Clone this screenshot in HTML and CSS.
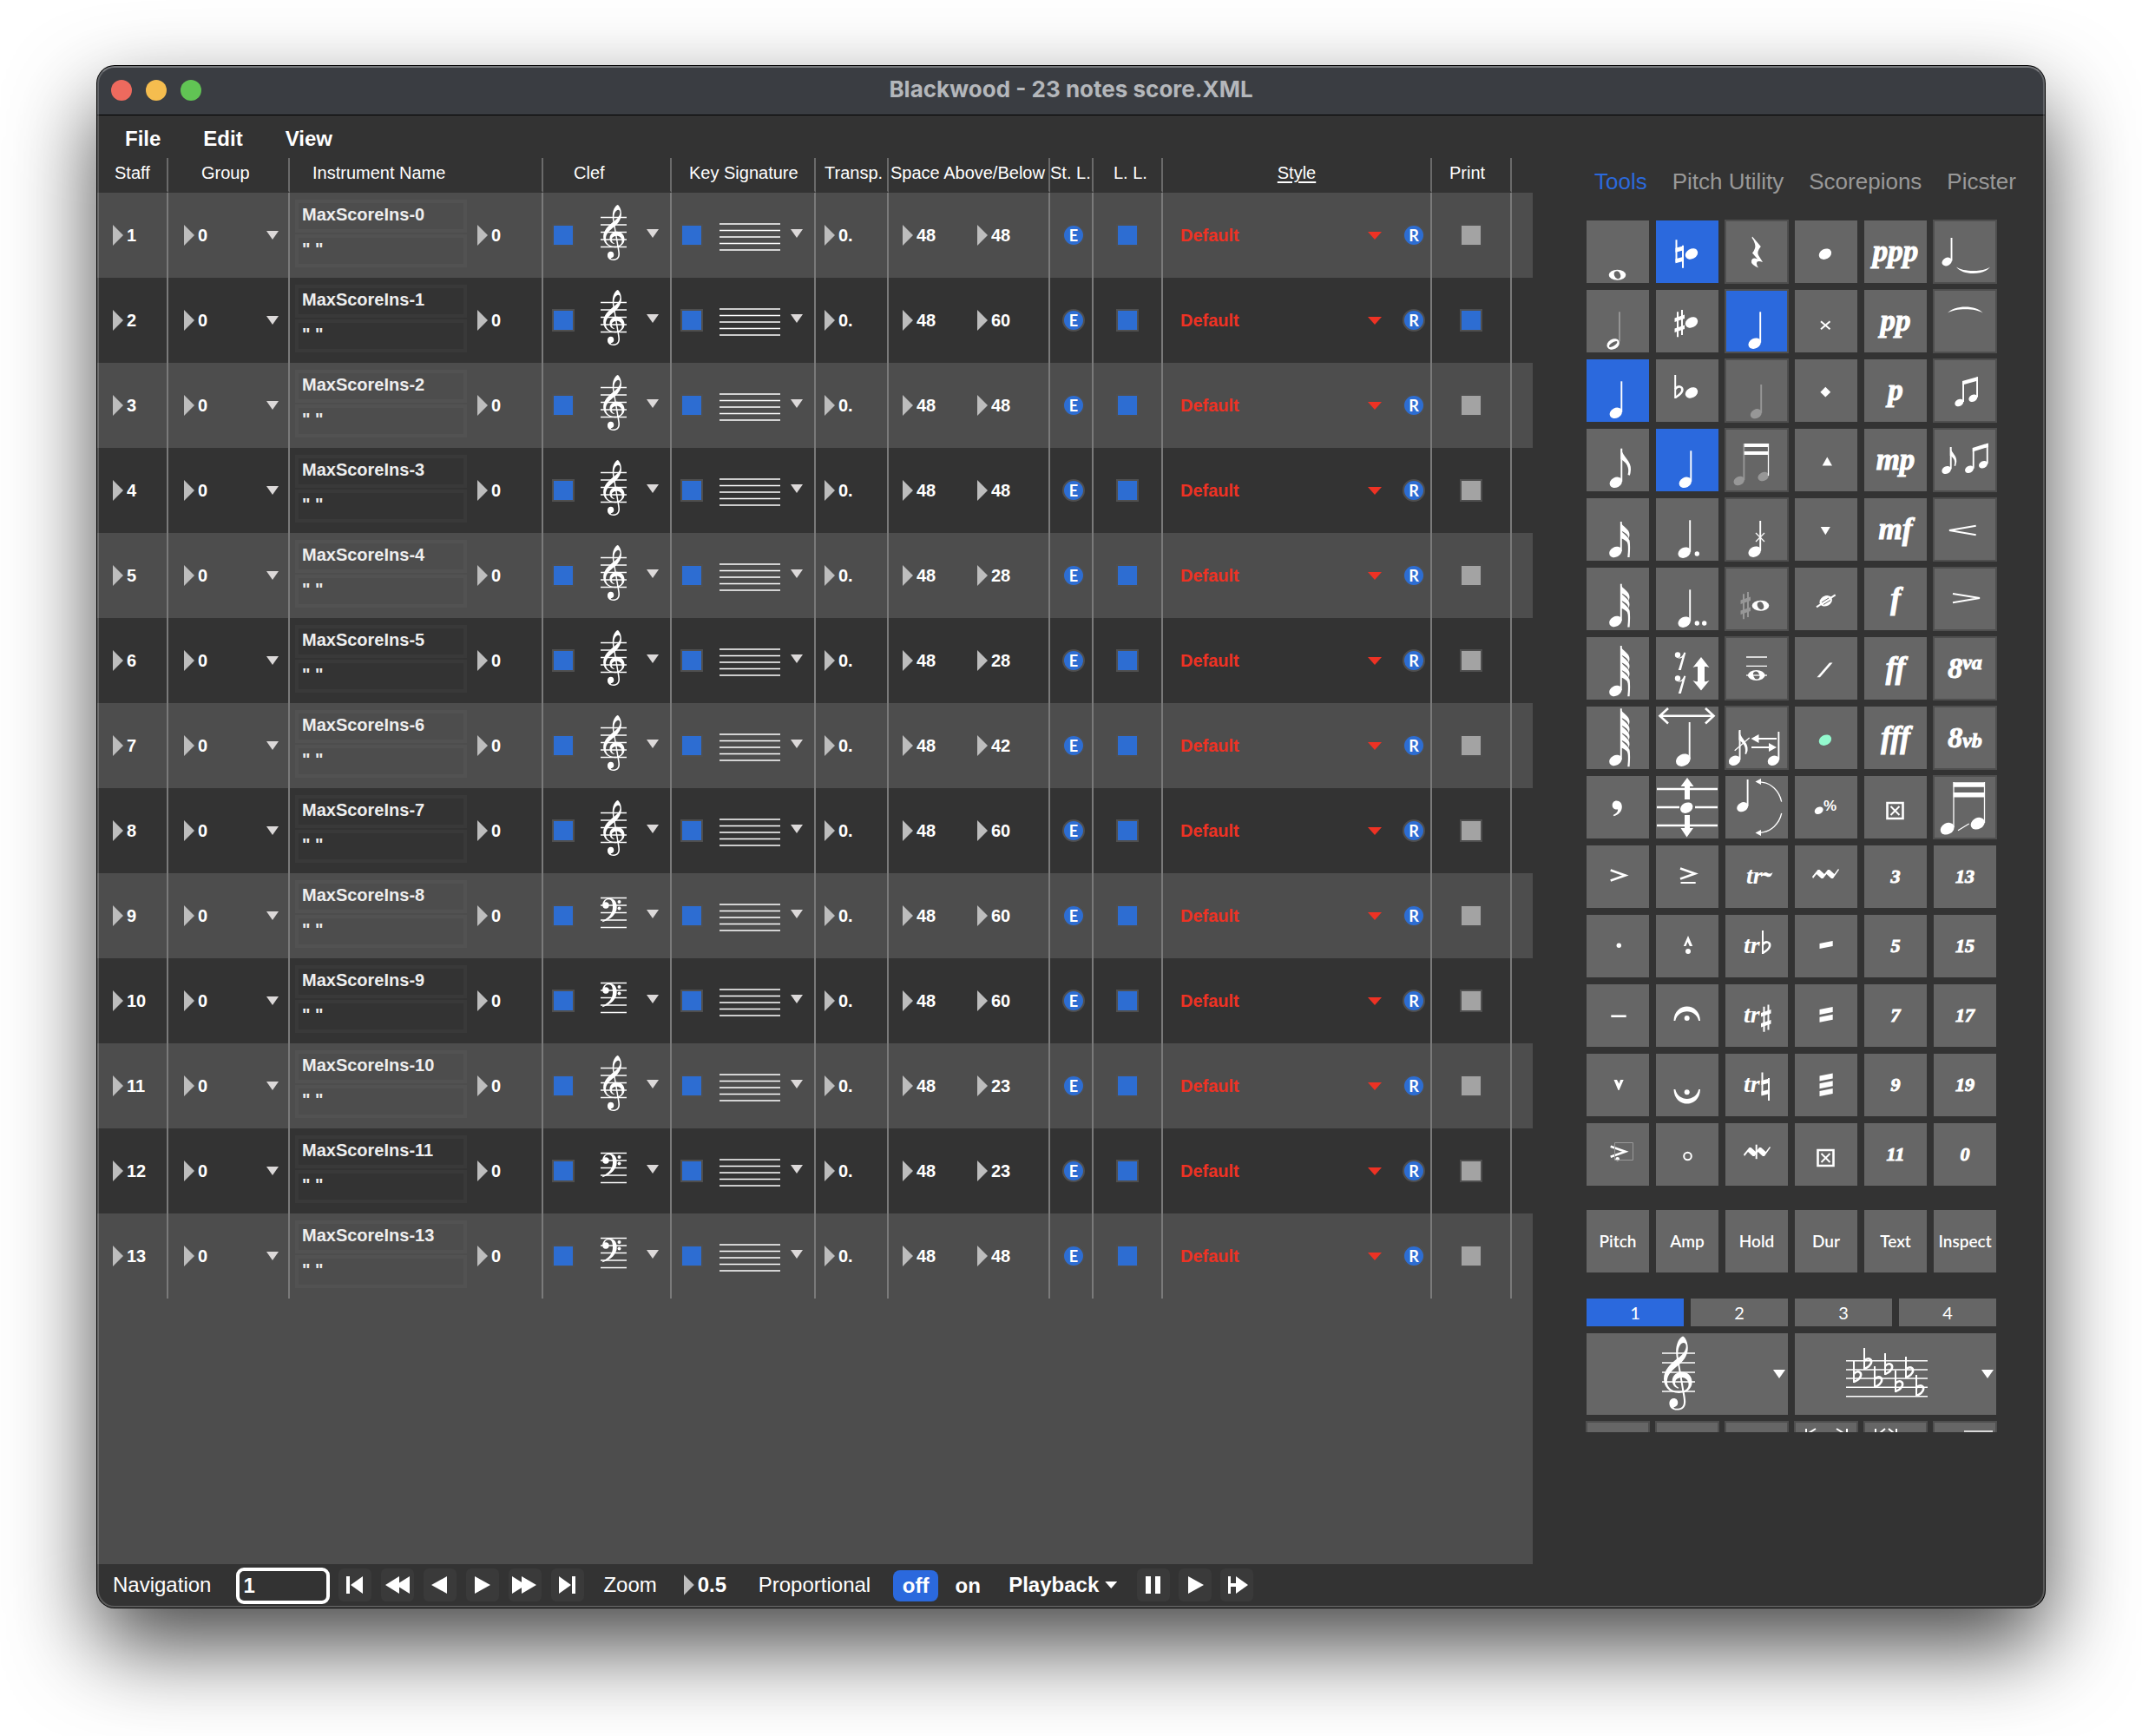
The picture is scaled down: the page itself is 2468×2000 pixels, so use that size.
FILE: index.html
```html
<!DOCTYPE html>
<html lang="en">
<head>
<meta charset="utf-8">
<title>Blackwood - 23 notes score.XML</title>
<link rel="stylesheet" href="styles.css">
</head>
<body>
<svg class="defs" aria-hidden="true">
  <symbol id="treble" viewBox="0 -1100 680 1760">
    <path transform="scale(1 -1)" d="M376 415l25 -145c3 -18 3 -18 29 -18c147 0 241 -113 241 -241c0 -113 -67 -198 -168 -238c-14 -6 -15 -5 -13 -17c11 -62 29 -157 29 -214c0 -170 -130 -200 -197 -200c-151 0 -190 98 -190 163c0 62 40 115 107 115c61 0 96 -47 96 -102c0 -58 -36 -85 -67 -94c-23 -7 -32 -10 -32 -17c0 -13 26 -29 80 -29c59 0 159 18 159 166c0 47 -15 134 -27 201c-2 12 -4 11 -15 9c-20 -4 -46 -6 -69 -6c-245 0 -364 165 -364 339c0 202 153 345 297 464c12 10 11 12 9 24c-7 41 -14 106 -14 164c0 104 24 229 98 311c20 22 51 48 65 48c11 0 37 -28 52 -50c41 -60 65 -146 65 -233c0 -153 -82 -280 -190 -381c-6 -6 -8 -7 -6 -19zM470 943c-61 0 -133 -96 -133 -252c0 -32 2 -66 6 -92c2 -13 6 -14 13 -8c79 69 174 159 174 270c0 55 -27 82 -60 82zM361 262l-21 128c-2 11 -4 12 -14 4c-47 -38 -93 -75 -153 -142c-83 -94 -93 -173 -93 -232c0 -139 113 -236 288 -236c20 0 40 2 56 5c15 3 16 3 14 14l-50 298c-2 11 -4 12 -20 8c-61 -17 -100 -60 -100 -117c0 -46 30 -89 72 -107c7 -3 15 -6 15 -13c0 -6 -4 -11 -12 -11c-7 0 -19 3 -27 6c-68 23 -115 87 -115 177c0 85 57 164 145 194c18 6 18 5 15 24zM430 103l49 -285c2 -12 4 -12 16 -6c56 28 94 79 94 142c0 88 -67 156 -148 163c-12 1 -13 -2 -11 -14z"/>
  </symbol>
</svg>

<main class="window">
  <header class="titlebar">
    <div class="lights">
      <button class="light light-close" aria-label="Close"></button>
      <button class="light light-min" aria-label="Minimize"></button>
      <button class="light light-zoom" aria-label="Zoom window"></button>
    </div>
    <h1 class="title">Blackwood - 23 notes score.XML</h1>
  </header>

  <div class="workspace">
    <section class="editor">
      <nav class="menubar" aria-label="Main menu">
        <button class="menu">File</button>
        <button class="menu">Edit</button>
        <button class="menu">View</button>
      </nav>

      <div class="staves">
        <table class="staff-table">
          <colgroup>
            <col class="w-staff"><col class="w-group"><col class="w-name"><col class="w-clef"><col class="w-key"><col class="w-transp"><col class="w-space"><col class="w-st"><col class="w-ll"><col><col class="w-print"><col class="w-end">
          </colgroup>
          <thead>
            <tr>
              <th class="h-staff">Staff</th><th class="h-group">Group</th><th class="h-name">Instrument Name</th><th class="h-clef">Clef</th><th class="h-key">Key Signature</th><th class="h-transp">Transp.</th><th class="h-space">Space Above/Below</th><th class="h-st">St. L.</th><th class="h-ll">L. L.</th><th class="h-style"><a href="#style">Style</a></th><th class="h-print">Print</th><td></td>
            </tr>
          </thead>
          <tbody id="rows"></tbody>
        </table>
      </div>

      <footer class="transport">
        <label class="lbl" for="nav">Navigation</label>
        <input class="nav-input" id="nav" type="text" value="1">
        <div class="btns btns-nav">
          <button class="tbtn" aria-label="First"><svg viewBox="0 0 38 38"><path d="M9 9h4v20H9zM28 9v20L14 19z"/></svg></button>
          <button class="tbtn" aria-label="Rewind"><svg viewBox="0 0 38 38"><path d="M21 9v20L5 19zM33 9v20L17 19z"/></svg></button>
          <button class="tbtn" aria-label="Previous"><svg viewBox="0 0 38 38"><path d="M27 9v20L9 19z"/></svg></button>
          <button class="tbtn" aria-label="Next"><svg viewBox="0 0 38 38"><path d="M10 9v20l18-10z"/></svg></button>
          <button class="tbtn" aria-label="Forward"><svg viewBox="0 0 38 38"><path d="M4 9v20l16-10zM15 9v20l17-10z"/></svg></button>
          <button class="tbtn" aria-label="Last"><svg viewBox="0 0 38 38"><path d="M24 9h4v20h-4zM9 9v20l14-10z"/></svg></button>
        </div>
        <label class="lbl lbl-zoom" for="zoom">Zoom</label>
        <span class="num num-zoom"><i class="tri"></i><input id="zoom" type="text" value="0.5"></span>
        <span class="lbl lbl-prop">Proportional</span>
        <div class="switch">
          <button class="opt opt-on" aria-pressed="true">off</button>
          <button class="opt" aria-pressed="false">on</button>
        </div>
        <button class="playback">Playback<i class="down"></i></button>
        <div class="btns btns-play">
          <button class="tbtn" aria-label="Pause"><svg viewBox="0 0 38 38"><path d="M10 9h6v20h-6zM21 9h6v20h-6z"/></svg></button>
          <button class="tbtn" aria-label="Play"><svg viewBox="0 0 38 38"><path d="M11 9v20l18-10z"/></svg></button>
          <button class="tbtn" aria-label="Play from here"><svg viewBox="0 0 38 38"><path d="M9 9h3v8h6V9l14 10-14 10v-8h-6v8H9z"/></svg></button>
        </div>
      </footer>
    </section>

    <aside class="sidebar">
      <nav class="tabs" aria-label="Palettes">
        <button class="tab tab-on">Tools</button>
        <button class="tab">Pitch Utility</button>
        <button class="tab">Scorepions</button>
        <button class="tab">Picster</button>
      </nav>
      <div class="palette" id="palette"></div>
      <div class="palette palette-text">
        <button class="tool">Pitch</button><button class="tool">Amp</button><button class="tool">Hold</button><button class="tool">Dur</button><button class="tool">Text</button><button class="tool">Inspect</button>
      </div>
      <div class="voices">
        <button class="voice voice-on">1</button><button class="voice">2</button><button class="voice">3</button><button class="voice">4</button>
      </div>
      <div class="pickers">
        <button class="picker" aria-label="Clef"><svg viewBox="0 0 232 94"><path class="ln" d="M87 23h38M87 34h38M87 45h38M87 56h38M87 67h38"/><use href="#treble" x="89" y="3" width="33" height="86"/><path d="M215 42h14l-7 10z"/></svg></button>
        <button class="picker" aria-label="Key signature"><svg viewBox="0 0 232 94" id="keysig"></svg></button>
      </div>
      <div class="cutoff">
        <div class="palette">
          <button class="tool edged" aria-label="Tool"></button><button class="tool edged" aria-label="Tool"></button><button class="tool edged" aria-label="Tool"></button>
          <button class="tool edged" aria-label="Spread"><svg viewBox="0 0 72 72"><path class="s2" d="M13 8v14M24 8l-8 5M48 8l8 5M60 8v14"/></svg></button>
          <button class="tool edged" aria-label="Contract"><svg viewBox="0 0 72 72"><path class="s2" d="M13 8v14M24 8l-6 5M28 8l6 5M37 8v14"/></svg></button>
          <button class="tool edged" aria-label="Line"><svg viewBox="0 0 72 72"><path class="s1" d="M35 11h33"/></svg></button>
        </div>
      </div>
    </aside>
  </div>
</main>
<script src="app.js"></script>
</body>
</html>
```
FILE: styles.css
```css
* { box-sizing: border-box; }

body {
  margin: 0;
  min-height: 100vh;
  padding: 76px 112px 148px;
  display: flex;
  background: #fff;
  color: #fff;
  font: 20px/24px "Liberation Sans", Arial, sans-serif;
}

button, input, select {
  font: inherit;
  color: inherit;
  margin: 0;
  padding: 0;
  border: 0;
  border-radius: 0;
  background: none;
  appearance: none;
}

svg { display: block; fill: #fff; }
.defs { position: absolute; width: 0; height: 0; }

/* Window frame */
.window {
  position: relative;
  flex: 1;
  display: flex;
  flex-direction: column;
  border-radius: 20px;
  background: #333;
  overflow: hidden;
  box-shadow: 0 0 0 1px #000, 0 44px 100px rgba(0, 0, 0, .72);
}
.window::after {
  content: "";
  position: absolute;
  inset: 0;
  border: 2px solid rgba(255, 255, 255, .2);
  border-top-color: rgba(255, 255, 255, .32);
  border-radius: 20px;
  pointer-events: none;
}

.titlebar {
  height: 57px;
  display: grid;
  grid-template-columns: 1fr auto 1fr;
  align-items: center;
  padding: 0 16px;
  background: #3a3d42;
  border-bottom: 1px solid #000;
}
.lights { display: flex; gap: 16px; }
.light { width: 24px; height: 24px; border-radius: 50%; }
.light-close { background: #ed6a5e; }
.light-min { background: #f5bd4f; }
.light-zoom { background: #61c454; }
.title {
  margin: 0;
  padding-bottom: 2px;
  font: 700 26px/32px Inter, sans-serif;
  color: #b4b7bb;
}

.workspace { flex: 1; display: flex; }
.editor { flex: 1; min-width: 0; display: flex; flex-direction: column; }

.menubar {
  height: 49px;
  padding: 13px 0 0 32px;
  display: flex;
  align-items: flex-start;
  gap: 49px;
}
.menu { font-weight: 700; font-size: 24px; line-height: 28px; }

/* Staff table */
.staves { flex: 1; background: #4d4d4d; }
.staff-table {
  width: 100%;
  table-layout: fixed;
  border-collapse: separate;
  border-spacing: 0;
}
.w-staff { width: 82px; }
.w-group { width: 140px; }
.w-name { width: 292px; }
.w-clef { width: 148px; }
.w-key { width: 166px; }
.w-transp { width: 84px; }
.w-space { width: 186px; }
.w-st { width: 50px; }
.w-ll { width: 80px; }
.w-print { width: 92px; }
.w-end { width: 24px; }

thead { background: #333; }
th {
  height: 40px;
  padding: 0 0 4px;
  font-weight: 400;
  text-align: left;
  white-space: nowrap;
  border-right: 2px solid #6a6a6a;
  border-bottom: 2px solid #333;
}
th a { color: inherit; text-underline-offset: 3px; }
.h-staff { padding-left: 20px; }
.h-group { padding-left: 38px; }
.h-name { padding-left: 26px; }
.h-clef { padding-left: 35px; }
.h-key { padding-left: 20px; }
.h-transp { padding-left: 10px; }
.h-space { padding-left: 2px; }
.h-ll { padding-left: 23px; }
.h-style { text-align: center; }
.h-print { padding-left: 20px; }

tbody td { height: 98px; padding: 0; border-right: 2px solid #7a7a7a; }
tbody td:last-child { border-right: 0; }
tbody tr:nth-child(even) { background: #333; }

.cell { display: flex; align-items: center; }
.c-staff { padding-left: 18px; }
.c-group { padding: 0 11px 0 18px; justify-content: space-between; }
.c-name { padding: 0 0 0 6px; gap: 12px; }
.c-clef { padding-left: 10px; }
.c-key { padding-left: 10px; }
.c-transp { padding-left: 10px; }
.c-space { padding-left: 16px; gap: 40px; }
.c-st { padding-left: 14px; }
.c-ll { padding-left: 26px; }
.c-style { padding: 0 6px 0 20px; gap: 24px; }
.c-print { padding-left: 32px; }

.num { display: flex; align-items: center; gap: 4px; font-weight: 700; }
.num input { width: 30px; height: 24px; }
.tri {
  width: 12px;
  height: 24px;
  background: #bdbdbd;
  clip-path: polygon(0 0, 100% 50%, 0 100%);
}
.arrow {
  width: 14px;
  height: 10px;
  background: #dcd9d9;
  clip-path: polygon(0 0, 100% 0, 50% 100%);
  color: transparent;
}
.names { display: flex; flex-direction: column; gap: 2px; padding-bottom: 4px; }
.names input {
  width: 198px;
  height: 38px;
  padding: 0 4px 4px;
  border: 4px solid rgba(255, 255, 255, .03);
  font-weight: 700;
  color: #eee;
}
.check {
  width: 26px;
  height: 26px;
  border: 2px solid #4f4f4f;
  background: #a3a3a3;
}
.check:checked { background: #2d6dd2; }
.staff-clef { width: 30px; height: 72px; margin: 0 23px 0 30px; }
.staff-key { width: 70px; height: 72px; margin: 0 12px 0 19px; }
.c-clef .arrow, .c-key .arrow { margin-bottom: 4px; }
.round {
  width: 26px;
  height: 26px;
  border: 2px solid #4f4f4f;
  border-radius: 50%;
  background: #2d6dd2;
  font: 700 18px/22px Lato, sans-serif;
  text-align: center;
}
.style-pick { flex: 1; display: flex; align-items: center; color: #ee3224; }
.style-pick select {
  flex: 1;
  font-weight: 700;
  background: url("data:image/svg+xml,%3Csvg xmlns='http://www.w3.org/2000/svg' width='16' height='9'%3E%3Cpath d='M0 0h16L8 9z' fill='%23ee3224'/%3E%3C/svg%3E") no-repeat right center;
}

/* Transport bar */
.transport {
  height: 50px;
  display: flex;
  align-items: center;
  padding: 0 0 2px 18px;
  background: #333;
  font-size: 24px;
  line-height: 28px;
}
.nav-input {
  width: 108px;
  height: 42px;
  margin: 2px 10px 0 29px;
  padding: 0 4px;
  border: 4px solid #fff;
  border-radius: 9px;
  font-weight: 700;
}
.btns { display: flex; gap: 11px; }
.tbtn { width: 38px; height: 38px; border-radius: 6px; background: #3a3a3a; }
.lbl-zoom { margin-left: 22px; }
.num-zoom { margin-left: 31px; }
.num-zoom input { width: 40px; height: 28px; }
.lbl-prop { margin-left: 30px; }
.switch { display: flex; gap: 8px; margin: 2px 0 0 26px; }
.opt { width: 52px; height: 36px; border-radius: 8px; font-weight: 700; }
.opt-on { background: #2b69dd; }
.playback { display: flex; align-items: center; gap: 7px; margin: 0 23px 0 21px; font-weight: 700; }
.down { width: 14px; height: 8px; background: #fff; clip-path: polygon(0 0, 100% 0, 50% 100%); }
.btns-play { gap: 10px; }

/* Tool sidebar */
.sidebar { width: 590px; padding: 60px 0 0 62px; }
.tabs { display: flex; gap: 29px; padding-left: 9px; margin-bottom: 29px; }
.tab { font-size: 26px; line-height: 32px; color: #999; white-space: nowrap; }
.tab-on { color: #2b69dd; }

.palette { display: grid; grid-template-columns: repeat(6, 72px); gap: 8px; }
.palette-text { margin: 28px 0 30px; }
.palette-text .tool { font: 600 19px/24px Lato, sans-serif; }
.tool {
  height: 72px;
  background: #666;
  font: italic 700 22px/24px "Liberation Serif", serif;
  -webkit-text-stroke: 1px #fff;
  white-space: nowrap;
}
.palette-text .tool { -webkit-text-stroke: 0; }
.tool svg { width: 72px; height: 72px; }
.edged { outline: 2px solid #4f4f4f; outline-offset: -1px; }
.sel { background: #2b69dd; }
.dyn { font-size: 35px; line-height: 40px; }
.oct { font-size: 34px; line-height: 40px; }
.oct small { font-size: 24px; line-height: 24px; }
.oct .up { vertical-align: 10px; }

.s1, .s2, .s3, .ln { fill: none; stroke: #fff; stroke-width: 2; }
.s1 { stroke-width: 1.3; }
.s3 { stroke-width: 2.6; }
.ln { stroke-width: 1.5; }
.dim { opacity: .32; }
.hole { fill: #666; }
.tr { font: italic 700 28px "Liberation Serif", serif; }
.pct { font: 700 17px "Liberation Sans", sans-serif; -webkit-text-stroke: 0; }

.voices { display: grid; grid-template-columns: repeat(4, 112px); gap: 8px; }
.voice { height: 32px; background: #666; font: 20px/24px Lato, sans-serif; }
.voice-on { background: #2b69dd; }
.pickers { display: flex; gap: 8px; margin-top: 8px; }
.picker { width: 232px; height: 94px; background: #666; }

.cutoff { margin: 6px 0 0 -2px; padding: 2px 2px 0; width: 476px; height: 14px; overflow: hidden; }
```
FILE: app.js
```js
// Staff list: space below, clef and print state per staff
const staves = [
  ['0', 48, 'treble', false], ['1', 60, 'treble', true], ['2', 48, 'treble', false],
  ['3', 48, 'treble', false], ['4', 28, 'treble', false], ['5', 28, 'treble', false],
  ['6', 42, 'treble', false], ['7', 60, 'treble', false], ['8', 60, 'bass', false],
  ['9', 60, 'bass', false], ['10', 23, 'treble', false], ['11', 23, 'bass', false],
  ['13', 48, 'bass', false]
];

const clefs = {
  treble: '<use href="#treble" x="2.500" y="1" width="26" height="64"/>',
  bass: '<g transform="translate(0 15)"><circle cx="6" cy="9" r="3.7"/><path d="M2.3 9C2.3 3.5 6 .8 10 .8c5.500 0 8.700 4.200 8.700 10.200C18.700 19 12 25 2.500 28.200L2 27c8-4 12-9 12-16 0-6-1.500-8.700-4.500-8.700-3 0-5 1.700-5 4.700z"/><circle cx="21.500" cy="5" r="2"/><circle cx="21.500" cy="12.500" r="2"/></g>'
};

const num = (label, v) => `<span class="num"><i class="tri"></i><input type="text" value="${v}" aria-label="${label}"></span>`;
const arrow = label => `<select class="arrow" aria-label="${label}"><option></option></select>`;
const check = (label, on) => `<input class="check" type="checkbox" aria-label="${label}"${on ? ' checked' : ''}>`;
const td = (name, html) => `<td><div class="cell c-${name}">${html}</div></td>`;

document.getElementById('rows').innerHTML = staves.map(([id, below, clef, print], i) => '<tr>' +
  td('staff', num('Staff', i + 1)) +
  td('group', num('Group', 0) + arrow('Group')) +
  td('name', `<div class="names"><input type="text" aria-label="Instrument name" value="MaxScoreIns-${id}"><input type="text" aria-label="Abbreviation" value="&quot; &quot;"></div>` + num('Instrument', 0)) +
  td('clef', check('Show clef', true) + `<svg class="staff-clef" viewBox="0 0 30 72"><path class="ln" d="M0 15.500h30M0 24h30M0 32.500h30M0 41h30M0 49.500h30"/>${clefs[clef]}</svg>` + arrow('Clef')) +
  td('key', check('Show key signature', true) + '<svg class="staff-key" viewBox="0 0 70 72"><path class="ln" d="M0 23h70M0 30.500h70M0 38h70M0 45.500h70M0 53h70"/></svg>' + arrow('Key signature')) +
  td('transp', num('Transposition', '0.')) +
  td('space', num('Space above', 48) + num('Space below', below)) +
  td('st', '<button class="round">E</button>') +
  td('ll', check('Ledger lines', true)) +
  td('style', '<span class="style-pick"><select aria-label="Style"><option>Default</option></select></span><button class="round">R</button>') +
  td('print', check('Print', print)) +
  '<td></td></tr>').join('');

// Notation drawing helpers, in a 72 x 72 button
const head = (x, y, r = 7.6) => `<ellipse cx="${x}" cy="${y}" rx="${r}" ry="${r * .76}" transform="rotate(-28 ${x} ${y})"/>`;
const rect = (x, y, w, h) => `<rect x="${x}" y="${y}" width="${w}" height="${h}"/>`;
const note = (x, y, top, r = 7.6) => head(x, y, r) + rect(x + r * .73, top, 1.9, y - top - 1);
const dot = (x, y, r = 2.7) => `<circle cx="${x}" cy="${y}" r="${r}"/>`;
const p = d => `<path d="${d}"/>`;
const s = (d, w = 2) => `<path class="s${w}" d="${d}"/>`;
const whole = (x, y) => `<ellipse cx="${x}" cy="${y}" rx="9.800" ry="6"/><ellipse class="hole" cx="${x}" cy="${y}" rx="3.500" ry="4.600" transform="rotate(-22 ${x} ${y})"/>`;
const natural = (x, y) => s(`M${x} ${y}v26M${x + 7.5} ${y + 6.5}v26`) + p(`M${x - 1} ${y + 9.5}l9.500-2.500v5l-9.500 2.500zM${x - 1} ${y + 22}l9.500-2.500v5l-9.500 2.500z`);
const sharp = (x, y) => s(`M${x + 3.5} ${y + 2.3}v29M${x + 8.5} ${y}v29`) + p(`M${x} ${y + 9.5}l11.500-4v4.500l-11.500 4zM${x} ${y + 21.5}l11.500-4v4.500l-11.500 4z`);
const flat = (x, y, h = 27) => s(`M${x} ${y}v${h}`) + `<path class="s3" d="M${x} ${y + h * .6}c4-5 9-2.500 8 2c-.8 3.500-4.500 5.500-8 ${h * .4 - 3}"/>`;
const flags = (n, top) => {
  let out = note(33.3, 62, top);
  for (let i = 0; i < n; i++) {
    const y = top + i * 8.6;
    out += p(`M39 ${y}c2 6 11 8 10.500 15.500l-.7 4c-1-5-5-7.500-9.800-9z`);
  }
  const e = top + (n - 1) * 8.6;
  return out + p(`M46.500 ${e + 13}c2 6 1.500 12 .8 19.500h2.300c.5-8 1-14-.3-20z`);
};
const chevron = (x, y) => s(`M${x} ${y}l17 6-17 6`, 3);
const bars = ys => ys.map(y => p(`M28.500 ${y + 3}l15.200-3v6l-15.200 3z`)).join('');
const zig = (x, y) => p(`M${x} ${y + 8.5}l6.500-8h2l5.500 5 4-5h2l5.500 5 4.500-6 1 1-7 10h-2l-5.500-5-4 5h-2l-5.500-5-4 5z`);
const boxed = y => `<path class="s3" d="M26.500 ${y + 1}h18v18h-18z"/>` + s(`M30.500 ${y + 5}l10 10M40.500 ${y + 5}l-10 10`);
const tr = x => `<text class="tr" x="${x}" y="44">tr</text>`;
const rest = y => dot(25, y + 3, 3.2) + p(`M23 ${y + 5}c4 2.500 7 1 9.500-5l1.800.5-5.500 20h-3l4.500-14.500c-2 1.500-5 1.500-7.300-1z`);
const fermata = 'M20.500 42C21 20 50.500 20 51 42h-1.800C46 27.500 25.500 27.500 22.300 42z';
const eighth = (x, y, top, r) => note(x, y, top, r) + p(`M${x + r * .73} ${top}c1.500 7 8 9 7.500 17l-1.200 5-1.500-.5c2-6-1-9.500-4.800-11.500z`);

// [label, drawing or text, classes]
const tools = [
  ['Whole', whole(35.5, 62.7)],
  ['Natural', natural(23.5, 22.3) + head(41, 38.5), 'sel'],
  ['Rest', p('M31 18.500L40.800 30Q36 36 38 40l5 8q-7-2.500-7 1.500 0 2.500 2 5Q29 50.500 30 46.500q1-4.500 7-2L31 37.500q4.500-5.500 3-10.500-1-4-3.500-7z'), 'edged'],
  ['Notehead', head(35, 38.7)], ['ppp', 'ppp', 'dyn'],
  ['Tie', note(15.2, 47.5, 20, 6) + p('M26 53.500C33 63.500 58 63.500 65 53.500 57 59.500 34 59.500 26 53.500z'), 'edged'],

  ['Half', head(30.7, 62.5) + '<ellipse class="hole" cx="30.700" cy="62.500" rx="5.500" ry="2" transform="rotate(-32 30.700 62.500)"/><g class="dim">' + rect(37, 25.3, 1.9, 34) + '</g>'],
  ['Sharp', sharp(21.5, 23) + head(41, 37.5)],
  ['Quarter rest mode', note(33.7, 61.7, 25.3), 'sel edged'],
  ['Cross head', s('M30 36.300l10.500 9M40.500 36.300l-10.500 9')], ['pp', 'pp', 'dyn'],
  ['Slur', p('M16 26.500C24 17 49 17 56.700 26.500 48 20.800 25 20.800 16 26.500z'), 'edged'],

  ['Quarter', note(33.8, 61.8, 25.3), 'sel'],
  ['Flat', flat(22.2, 18) + head(41, 38.5)],
  ['Hidden note', `<g class="dim">${note(35.3, 62.7, 29, 6.8)}</g>`, 'edged'],
  ['Diamond head', p('M35.300 31.800l5.900 5.900-5.900 5.900-5.900-5.900z')], ['p', 'p', 'dyn'],
  ['Beam', note(29.3, 50, 25, 5.2) + note(45.3, 44.7, 20.5, 5.2) + p('M33 25l18-5v4.500l-18 5z'), 'edged'],

  ['Eighth', note(33.8, 61.8, 22.7) + p('M39.400 22.700C42 32 52 38 51 47q-.2 4-1.200 6.800L47.500 53C50 45 46 38.500 39.400 35z')],
  ['Notes', note(33.8, 61.8, 25.3), 'sel'],
  ['Feathered', p('M21.700 17h28.300v4H21.700zM21.700 26h28.300v4H21.700z') + `<g class="dim">${note(15.7, 60, 17, 6.5)}${head(43.7, 55, 6.5)}</g>` + s('M49.500 17v37', 1), 'edged'],
  ['Triangle up', p('M37.300 32.500L43 42.500H31.700z')], ['mp', 'mp', 'dyn'],
  ['Unbeam', eighth(14.7, 47.5, 21, 5.6) + note(41, 46.7, 22, 5.2) + note(57, 41.3, 17, 5.2) + p('M44.800 22l18-5.500v4.500l-18 5.500z'), 'edged'],

  ['16th', flags(2, 27)],
  ['Dot', note(32.7, 62.7, 25.3) + dot(47.3, 64)],
  ['Struck stem', note(33.7, 61.7, 26) + s('M35 40l10 10M45 40L35 50', 1), 'edged'],
  ['Triangle down', p('M29.700 33h11.100l-5.500 9.300z')], ['mf', 'mf', 'dyn'],
  ['Crescendo', s('M48.700 31.700L18 37l30.700 5.300'), 'edged'],

  ['32nd', flags(3, 18.7)],
  ['Double dot', note(32.7, 62.7, 25.3) + dot(47.3, 64) + dot(55.7, 64)],
  ['Hidden accidental', `<g class="dim">${sharp(17.5, 28)}</g>` + whole(40.5, 43.7), 'edged'],
  ['Slashed head', head(35.7, 38.3) + s('M25 45.300L46.700 31.300') + '<path d="M31 40l8-5M33 42.500l8-5" stroke="#666" fill="none"/>'], ['f', 'f', 'dyn'],
  ['Diminuendo', s('M22 30l31 5-31 5.300'), 'edged'],

  ['64th', flags(4, 10)],
  ['Move rests', rest(17.5) + rest(44.5) + p('M52 23l9.500 12q-3-1.500-5.500-1v17q2.500.5 5.500-1L52 61.500 42.500 50q3 1.500 5.500 1V34q-2.500-.5-5.500 1z')],
  ['Ledger', s('M24 23h24M24 33.300h24', 1) + whole(35.7, 44) + s('M24 44h24', 1), 'edged'],
  ['Slash head', p('M25.500 46.300L40 29.500h3.500L29 46.300z')], ['ff', 'ff', 'dyn'],
  ['8va', '8<small class="up">va</small>', 'oct edged'],

  ['128th', flags(5, 2.3)],
  ['Move horizontally', s('M5 10.700h61M14 2L4.500 10.700 14 19.500M57 2l9.500 8.700L57 19.500', 3) + note(31.3, 61.7, 18, 8.8)],
  ['Grace note', note(10.5, 62.3, 27, 7) + p('M15.500 27C18 38 27 41 25.500 51l-1.500 4-1.500-.5c2-8-2-12.500-7-16z') + note(55.3, 62.3, 29, 7) + s('M10.700 50.700L27.700 36', 1) + s('M36 37h23M30 47h21') + p('M29.500 37l9-5v10zM59 47l-9-5v10z'), 'edged'],
  ['Coloured head', `<g fill="#93f9ce">${head(35, 38.7)}</g>`], ['fff', 'fff', 'dyn'],
  ['8vb', '8<small>vb</small>', 'oct edged'],

  ['Breath', p('M34.500 28.500c4 0 6.300 3 6.300 7 0 5-3.500 9-9.300 10.800l-.8-1.300c4-2 5.500-4 5.500-6.500-4 .6-6.500-1.500-6.500-4.800 0-3 2-5.200 4.800-5.200z')],
  ['Move vertically', s('M1 15h70M1 36h26M45 36h26M1 57h70', 3) + head(35.3, 36.7) + p('M36 2l7.500 10H39v15h-6V12h-4.500zM33 45h6v15h4l-7.500 10.500L28.500 60H33z')],
  ['Flip stem', note(19.7, 35.7, 4, 6.8) + s('M64.700 29.700C62 17 53 8 40 6.800M64.700 43C62 55 53 64 40 65.300', 1) + p('M34.500 6.500l6.500-3.500v7zM34.500 65.500l6.500-3.500v7z')],
  ['Head size', head(27.7, 39.7, 5.2) + '<text class="pct" x="33" y="40">%</text>'],
  ['Delete dynamic', boxed(30)],
  ['Tremolo', p('M22.700 7.300H59v5.500H22.700zM22.700 18.900H59v5.700H22.700z') + s('M23 7v52M58.500 7v47M28 62.700L40.700 55', 1) + head(15.7, 60.7, 8.4) + head(50.7, 54.7, 8.4), 'edged'],

  ['Accent', chevron(27.7, 28.5)], ['Accent tenuto', chevron(28, 26.5) + s('M28.500 43h17.200')],
  ['Trill', tr(24) + p('M41 35q4-6 8-3 3 1.500 5.500-1-2 7.500-7.500 4.500-3-1.500-6 0z')], ['Mordent', zig(20, 27.5)], ['3', '3'], ['13', '13'],

  ['Staccato', dot(37.3, 35.3)], ['Marcato', p('M37 24l5.200 12h-3.400L36.500 31 34.500 36h-2.700z') + dot(37, 42, 3)],
  ['Trill flat', tr(21) + flat(43, 18)], ['Tremolo 1', bars([30])], ['5', '5'], ['15', '15'],

  ['Tenuto', s('M28.300 36.700h17.400', 3)], ['Fermata', p(fermata) + dot(35.7, 39, 3)],
  ['Trill sharp', tr(21) + sharp(41, 23.5)], ['Tremolo 2', bars([26, 34.7])], ['7', '7'], ['17', '17'],

  ['Wedge', p('M31.500 30H35l2.500 4.500L39 30h3.700L37.500 42h-1z')], ['Fermata below', `<g transform="matrix(1 0 0 -1 0 83)">${p(fermata)}</g>` + dot(35.7, 44.3, 3)],
  ['Trill natural', tr(21) + natural(42.5, 21.5)], ['Tremolo 3', bars([22.5, 31.2, 40])], ['9', '9'], ['19', '19'],

  ['Accent staccato', chevron(27.7, 26.7) + dot(35.7, 41.3, 2.3) + '<path d="M32.500 22.500h21v20h-21z" fill="none" stroke="#999"/>'],
  ['Harmonic', '<circle class="s2" cx="36.500" cy="38" r="4.300"/>'],
  ['Inverted mordent', zig(21, 27.5) + s('M35.700 24.700v16.500')], ['Delete tremolo', boxed(30)], ['11', '11'], ['0', '0']
];

document.getElementById('palette').innerHTML = tools.map(([label, art, cls = '']) =>
  `<button class="tool ${cls}" aria-label="${label}">${art[0] === '<' ? `<svg viewBox="0 0 72 72">${art}</svg>` : art}</button>`).join('');

// Seven flats on the key signature picker
const tops = [32, 17, 38, 23, 43, 27, 48];
document.getElementById('keysig').innerHTML =
  '<path class="ln" d="M59 31.700h94M59 42h94M59 52h94M59 62.300h94M59 72.700h94"/>' +
  tops.map((y, i) => flat(68 + i * 12, y, 25)).join('') + '<path d="M215 42h14l-7 10z"/>';
```
